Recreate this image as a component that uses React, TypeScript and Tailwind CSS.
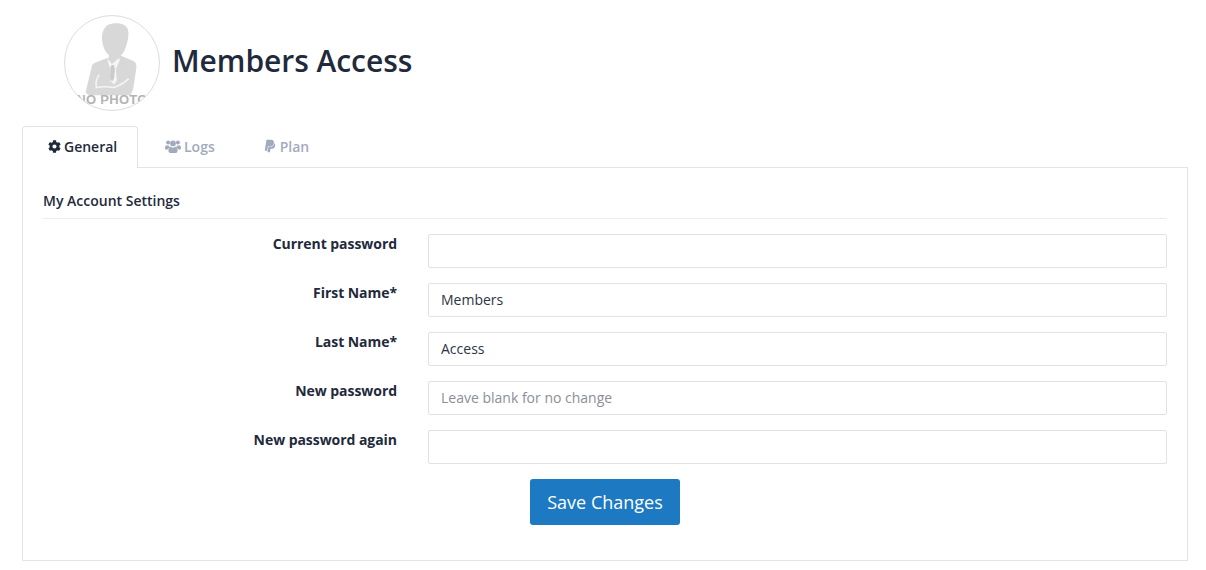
import React from 'react';
import { FaCog, FaPaypal } from 'react-icons/fa';

const fields = [
    { label: 'Current password', value: '', placeholder: '' },
    { label: 'First Name*', value: 'Members', placeholder: '' },
    { label: 'Last Name*', value: 'Access', placeholder: '' },
    { label: 'New password', value: '', placeholder: 'Leave blank for no change' },
    { label: 'New password again', value: '', placeholder: '' },
];

const UsersIcon: React.FC = () => (
    <svg viewBox="0 0 16 13" className="w-[16px] h-[13px]" fill="currentColor">
        <circle cx="3.1" cy="2.6" r="2" />
        <circle cx="12.9" cy="2.6" r="2" />
        <circle cx="8" cy="3.4" r="2.9" />
        <path d="M0 8.2C0 6.4.7 5.2 2 5.2c.9.6 1.7.7 2.4.4-.2.6-.2 1.2 0 1.8-.8.5-1.4 1.3-1.7 2.1H1.2C.5 9.5 0 9 0 8.2z" />
        <path d="M16 8.2c0-1.8-.7-3-2-3-.9.6-1.7.7-2.4.4.2.6.2 1.2 0 1.8.8.5 1.4 1.3 1.7 2.1h1.5c.7 0 1.2-.5 1.2-1.3z" />
        <path d="M3.4 10.4c0-2 .8-3.6 2.2-3.6 1.5 1.1 3.3 1.1 4.8 0 1.4 0 2.2 1.6 2.2 3.6 0 1.5-.9 2.6-2.2 2.6H5.6c-1.3 0-2.2-1.1-2.2-2.6z" />
    </svg>
);

const Avatar: React.FC = () => (
    <div className="relative w-[96px] h-[96px] rounded-full border border-[#dcdcdc] bg-white overflow-hidden shrink-0">
        <svg viewBox="0 0 96 96" className="absolute inset-0 w-full h-full">
            {/* head */}
            <path fill="#d8d8d8" d="M44 9c7-3 17-2 20 4 2 6 0 13-2 19-1 4-4 8-7 10l-1 4-10-1 1-5c-4-3-6-8-7-14-1-7 1-14 6-17z" />
            {/* body with folded arms */}
            <path fill="#d8d8d8" d="M43 43l-13 5c-2 1-3 3-3 5l-6 25c2 2 4 3 6 3h40c1-3 3-6 3-9l3-20c0-3-1-5-3-6l-14-6-5 2z" />
            {/* collar and tie */}
            <path fill="#f5f5f5" d="M43 43l5 6 7-6 1 2-4 9 1 12-3 4-4-4 2-12-3-3z" />
            <path fill="#cbcbcb" d="M47 50h3l1 4-1 10-2 3-2-3 1-10z" />
            {/* arm fold */}
            <path fill="none" stroke="#f4f4f4" strokeWidth="1.6" d="M35 60c-3 4-4 8-3 13 6-1 12-1 18 0 6-2 11-5 15-9" />
        </svg>
        <span className="absolute left-0 right-0 top-[76px] text-center text-[13px] leading-[16px] font-bold tracking-[0.3px] whitespace-nowrap text-[#b4b4b4] font-['Liberation_Sans',sans-serif]">
            NO PHOTO
        </span>
    </div>
);

export default function App() {
    return (
        <div className="w-[1206px] h-[570px] bg-white overflow-hidden font-['Open_Sans',sans-serif] text-[#1f2a3c]">
            <div className="flex items-center pl-[64px] pt-[15px] gap-[12px]">
                <Avatar />
                <h1 className="text-[30px] leading-[40px] font-semibold mb-[4px] tracking-[-0.05px]">Members Access</h1>
            </div>

            <div className="mx-[22px] mt-[15px] w-[1166px]">
                <div className="flex h-[42px] relative z-10">
                    <div className="w-[116px] h-[42px] border border-b-0 border-[#e4e4e4] rounded-t-[4px] bg-white flex items-center pl-[25px] pb-[2px] gap-[3px] text-[14px] font-semibold text-[#1f2a3c]">
                        <FaCog className="w-[13px] h-[13px]" />
                        General
                    </div>
                    <div className="flex items-center gap-[3px] ml-[27px] pb-[2px] text-[14px] font-semibold text-[#a3aabd]">
                        <UsersIcon />
                        Logs
                    </div>
                    <div className="flex items-center gap-[3px] ml-[48px] pb-[2px] text-[14px] font-semibold text-[#a3aabd]">
                        <FaPaypal className="w-[14px] h-[14px]" />
                        Plan
                    </div>
                </div>
                <div className="border border-[#e4e4e4] -mt-px h-[394px] px-[20px] pt-[23px]">
                    <div className="text-[14px] leading-[20px] font-semibold pb-[7px] border-b border-[#ececec]">My Account Settings</div>
                    <div className="flex flex-col gap-[15px] mt-[15px]">
                        {fields.map((f) => (
                            <div key={f.label} className="flex">
                                <label className="w-[354px] text-right text-[14px] leading-[20px] font-bold tracking-[-0.05px] shrink-0">{f.label}</label>
                                <input
                                    readOnly
                                    value={f.value}
                                    placeholder={f.placeholder}
                                    className="ml-[31px] flex-1 h-[34px] px-[12px] pb-[2px] border border-[#e2e2e2] rounded-[2px] text-[14px] text-[#2c3546] placeholder:text-[#8a8f98] outline-none"
                                />
                            </div>
                        ))}
                    </div>
                    <div className="flex mt-[15px] pl-[487px]">
                        <button className="w-[150px] h-[46px] rounded-[3px] bg-[#1d79c1] text-white text-[18px]">Save Changes</button>
                    </div>
                </div>
            </div>
        </div>
    );
}
